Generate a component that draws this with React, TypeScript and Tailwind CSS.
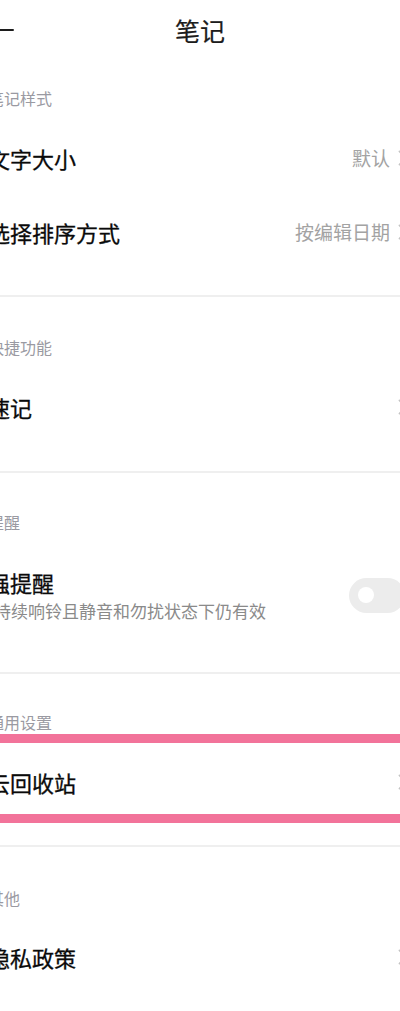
import React from "react";

const FONT = { fontFamily: '"Noto Sans CJK SC", "Noto Sans", sans-serif' };

function Chevron() {
  return (
    <svg width="9" height="16" viewBox="0 0 9 16" className="ml-[8px] shrink-0">
      <path d="M1.5 1.5 L7.5 8 L1.5 14.5" fill="none" stroke="#c4c4c4" strokeWidth="1.8" strokeLinecap="round" strokeLinejoin="round" />
    </svg>
  );
}

function Header({ text, pt }: { text: string; pt: string }) {
  return (
    <div className={`${pt} text-[16px] leading-[20px] text-[#9a9aa2]`}>{text}</div>
  );
}

const TITLE = "text-[22px] leading-[28px] text-[#0a0a0a] [-webkit-text-stroke:0.3px_#0a0a0a]";

function Row({ title, value, chevron = true }: { title: string; value?: string; chevron?: boolean }) {
  return (
    <div className="flex h-[74px] items-center justify-between pr-[5px]">
      <span className={TITLE}>{title}</span>
      <div className="flex items-center">
        {value && <span className="text-[19px] leading-[24px] text-[#a3a3a3]">{value}</span>}
        {chevron && <Chevron />}
      </div>
    </div>
  );
}

function Divider() {
  return <div className="h-[2px] bg-[#efefef]" />;
}

export default function App() {
  return (
    <div className="w-[400px] h-[1011px] overflow-hidden bg-white" style={FONT}>
      <div className="w-[424px] -ml-[12px]">
        {/* top bar */}
        <div className="grid h-[60px] grid-cols-[1fr_auto_1fr] items-center">
          <div className="flex items-center">
            <svg width="26" height="20" viewBox="0 0 26 20">
              <path d="M25 10 H1 M1 10 L9 2 M1 10 L9 18" fill="none" stroke="#1c1c1c" strokeWidth="2" strokeLinecap="round" strokeLinejoin="round" />
            </svg>
          </div>
          <div className="text-[25px] leading-[32px] text-[#1c1c1c] [-webkit-text-stroke:0.2px_#1c1c1c]">笔记</div>
          <div />
        </div>

        {/* section 1 */}
        <Header text="笔记样式" pt="pt-[28px]" />
        <div className="mt-[13px]">
          <Row title="文字大小" value="默认" />
          <Row title="选择排序方式" value="按编辑日期" />
        </div>
        <div className="h-[26px]" />
        <Divider />

        {/* section 2 */}
        <Header text="快捷功能" pt="pt-[40px]" />
        <div className="mt-[13px]">
          <Row title="速记" />
        </div>
        <div className="h-[27px]" />
        <Divider />

        {/* section 3 */}
        <Header text="提醒" pt="pt-[39px]" />
        <div className="mt-[13px] flex h-[100px] items-center justify-between pr-[7px]">
          <div className="flex flex-col">
            <span className={TITLE}>强提醒</span>
            <span className="ml-[6px] mt-[4px] text-[17px] leading-[22px] text-[#8a8a8a]">持续响铃且静音和勿扰状态下仍有效</span>
          </div>
          <div className="flex h-[35px] w-[56px] items-center rounded-full bg-[#ececec] pl-[9px]">
            <div className="h-[16px] w-[16px] rounded-full bg-white" />
          </div>
        </div>
        <div className="h-[27px]" />
        <Divider />

        {/* section 4 */}
        <Header text="通用设置" pt="pt-[38px]" />
        <div className="mt-[2px] flex h-[89px] items-center justify-between border-y-[9px] border-[#f2739a] pr-[5px] pt-[7px]">
          <span className={TITLE}>云回收站</span>
          <Chevron />
        </div>
        <div className="h-[22px]" />
        <Divider />

        {/* section 5 */}
        <Header text="其他" pt="pt-[41px]" />
        <div className="mt-[12px]">
          <Row title="隐私政策" />
        </div>
      </div>
    </div>
  );
}
